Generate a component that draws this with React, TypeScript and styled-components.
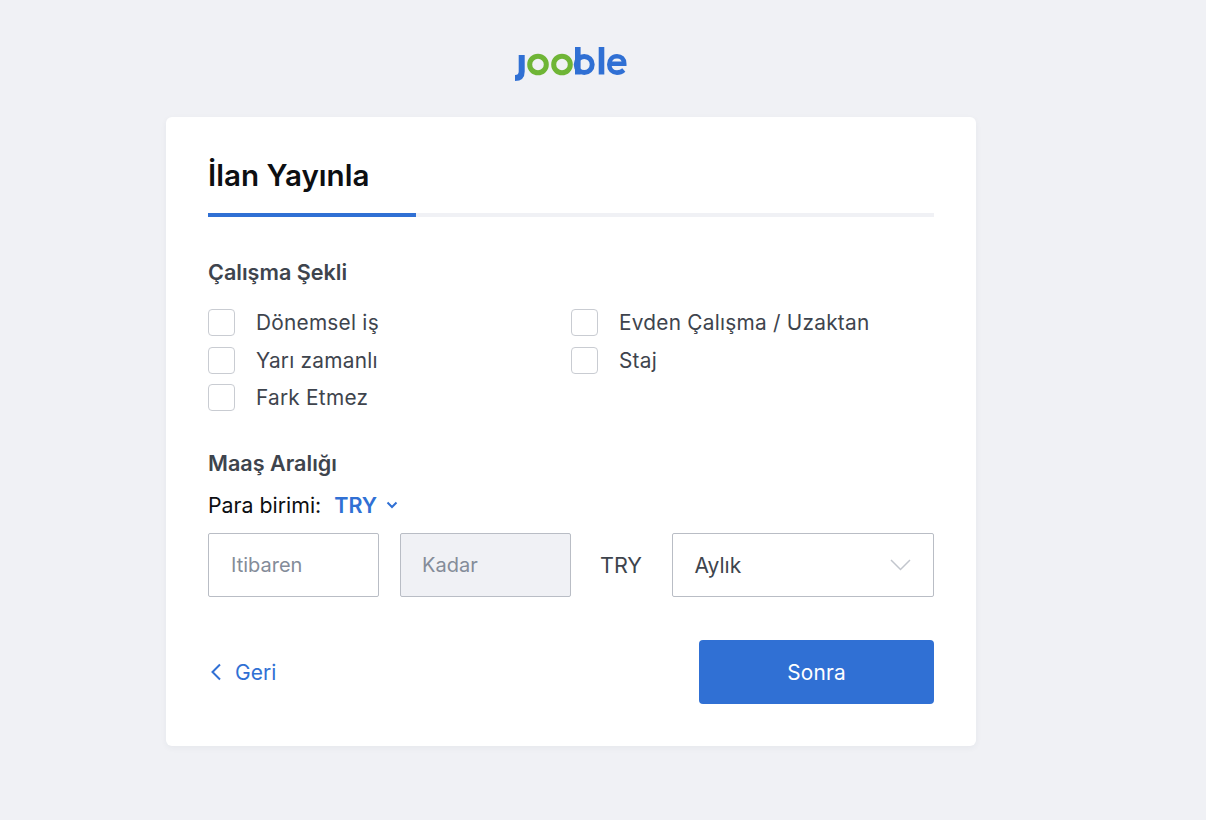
import React from "react";
import styled, { createGlobalStyle } from "styled-components";

const Global = createGlobalStyle`
  html, body { margin: 0; padding: 0; background: #f0f1f5; }
  body { font-family: Inter, "Liberation Sans", sans-serif; }
  * { box-sizing: border-box; }
`;

const Page = styled.div`
  width: 1206px;
  height: 820px;
  overflow: hidden;
  background: #f0f1f5;
  padding-left: 166px;
`;

const LogoRow = styled.div`
  width: 810px;
  height: 117px;
  padding: 47px 0 0 349px;
  svg { display: block; }
`;

const Card = styled.main`
  width: 810px;
  height: 629px;
  background: #fff;
  border-radius: 6px;
  padding: 42px 42px 0;
  box-shadow: 0 2px 6px rgba(40, 50, 70, 0.05);
`;

const Title = styled.h1`
  margin: 0;
  font-size: 29.6px;
  line-height: 32px;
  font-weight: 600;
  color: #0d0f12;
`;

const Track = styled.div`
  margin-top: 22px;
  height: 4px;
  background: #f0f1f5;
`;

const Fill = styled.div<{ $pct: number }>`
  height: 100%;
  width: ${(p) => p.$pct}%;
  background: #3070d4;
`;

const SectionTitle = styled.h2<{ $top: number }>`
  margin: ${(p) => p.$top}px 0 0;
  font-size: 21.6px;
  line-height: 22px;
  font-weight: 600;
  color: #3e444d;
`;

const Options = styled.div`
  margin-top: 26.4px;
  display: grid;
  grid-template-columns: 363px 363px;
  row-gap: 10.4px;
`;

const Option = styled.label`
  display: flex;
  align-items: center;
  gap: 21px;
  height: 27px;
  font-size: 20.8px;
  letter-spacing: 0.25px;
  color: #3e444d;
`;

const Box = styled.span`
  width: 27px;
  height: 27px;
  border: 1px solid #c9ccd2;
  border-radius: 4px;
  background: #fff;
  flex: none;
`;

const CurrencyRow = styled.div`
  margin-top: 19px;
  display: flex;
  align-items: center;
  height: 24px;
  font-size: 21.3px;
  color: #0d0f12;
`;

const Currency = styled.span`
  margin-left: 13px;
  font-weight: 600;
  font-size: 21.5px;
  color: #3070d4;
  display: flex;
  align-items: center;
  gap: 9px;
`;

const SalaryRow = styled.div`
  margin-top: 16px;
  display: flex;
  align-items: center;
  height: 64px;
`;

const Field = styled.div<{ $disabled?: boolean }>`
  width: 171px;
  height: 64px;
  margin-right: 21px;
  padding-left: ${(p) => (p.$disabled ? 21 : 22)}px;
  display: flex;
  align-items: center;
  border: 1px solid #b9bdc5;
  border-radius: 2px;
  font-size: 20px;
  color: #848c99;
  background: ${(p) => (p.$disabled ? "#f0f1f5" : "#fff")};
`;

const Unit = styled.span`
  margin-left: 8px;
  width: 72px;
  font-size: 21.6px;
  color: #3e444d;
`;

const Select = styled.div`
  width: 262px;
  height: 64px;
  padding: 0 22px 0 21.5px;
  display: flex;
  align-items: center;
  justify-content: space-between;
  border: 1px solid #b9bdc5;
  border-radius: 2px;
  font-size: 21px;
  color: #3e444d;
`;

const Actions = styled.div`
  margin-top: 43px;
  display: flex;
  align-items: center;
  justify-content: space-between;
`;

const Back = styled.a`
  display: flex;
  align-items: center;
  gap: 13px;
  padding-left: 2px;
  font-size: 21px;
  color: #3070d4;
`;

const Next = styled.button`
  width: 235px;
  height: 64px;
  border: 0;
  border-radius: 4px;
  background: #3070d4;
  color: #fff;
  font-family: inherit;
  font-size: 20.8px;
  letter-spacing: 0.2px;
`;

const Logo = () => (
  <svg width="113" height="34" viewBox="0 0 113 34" fill="none" aria-label="jooble">
    <path d="M6.7 8V24.5C6.7 29 4.5 31 0 31" stroke="#3070d4" strokeWidth="6" />
    <circle cx="23" cy="17.5" r="8.3" stroke="#6fb536" strokeWidth="5" />
    <circle cx="47" cy="17.5" r="8.3" stroke="#6fb536" strokeWidth="5" />
    <path d="M62.8 0V27.5" stroke="#3070d4" strokeWidth="5.6" />
    <circle cx="69.2" cy="17.5" r="8" stroke="#3070d4" strokeWidth="5" />
    <path d="M86.5 0V27.5" stroke="#3070d4" strokeWidth="5.6" />
    <path d="M95 16.8H109.2C109.2 11.8 106.2 9.3 102 9.3C97.5 9.3 94.3 12.6 94.3 17.5C94.3 22.5 97.5 25.6 102 25.6C104.8 25.6 106.8 24.8 108.8 23" stroke="#3070d4" strokeWidth="4.6" />
  </svg>
);

const left = ["Dönemsel iş", "Evden Çalışma / Uzaktan", "Yarı zamanlı", "Staj", "Fark Etmez"];

export default function App() {
  return (
    <Page>
      <Global />
      <LogoRow>
        <Logo />
      </LogoRow>
      <Card>
        <Title>İlan Yayınla</Title>
        <Track>
          <Fill $pct={28.65} />
        </Track>
        <SectionTitle $top={44}>Çalışma Şekli</SectionTitle>
        <Options>
          {left.map((t) => (
            <Option key={t}>
              <Box />
              {t}
            </Option>
          ))}
        </Options>
        <SectionTitle $top={41}>Maaş Aralığı</SectionTitle>
        <CurrencyRow>
          Para birimi:
          <Currency>
            TRY
            <svg width="12" height="8" viewBox="0 0 12 8" fill="none">
              <path d="M1.5 1.5L6 6L10.5 1.5" stroke="#3070d4" strokeWidth="2" />
            </svg>
          </Currency>
        </CurrencyRow>
        <SalaryRow>
          <Field>Itibaren</Field>
          <Field $disabled>Kadar</Field>
          <Unit>TRY</Unit>
          <Select>
            Aylık
            <svg width="21" height="12" viewBox="0 0 21 12" fill="none">
              <path d="M1 1L10.5 10.5L20 1" stroke="#c2c6cd" strokeWidth="1.5" />
            </svg>
          </Select>
        </SalaryRow>
        <Actions>
          <Back>
            <svg width="12" height="18" viewBox="0 0 12 18" fill="none">
              <path d="M10 1.5L2.5 9L10 16.5" stroke="#3070d4" strokeWidth="2" />
            </svg>
            Geri
          </Back>
          <Next>Sonra</Next>
        </Actions>
      </Card>
    </Page>
  );
}
